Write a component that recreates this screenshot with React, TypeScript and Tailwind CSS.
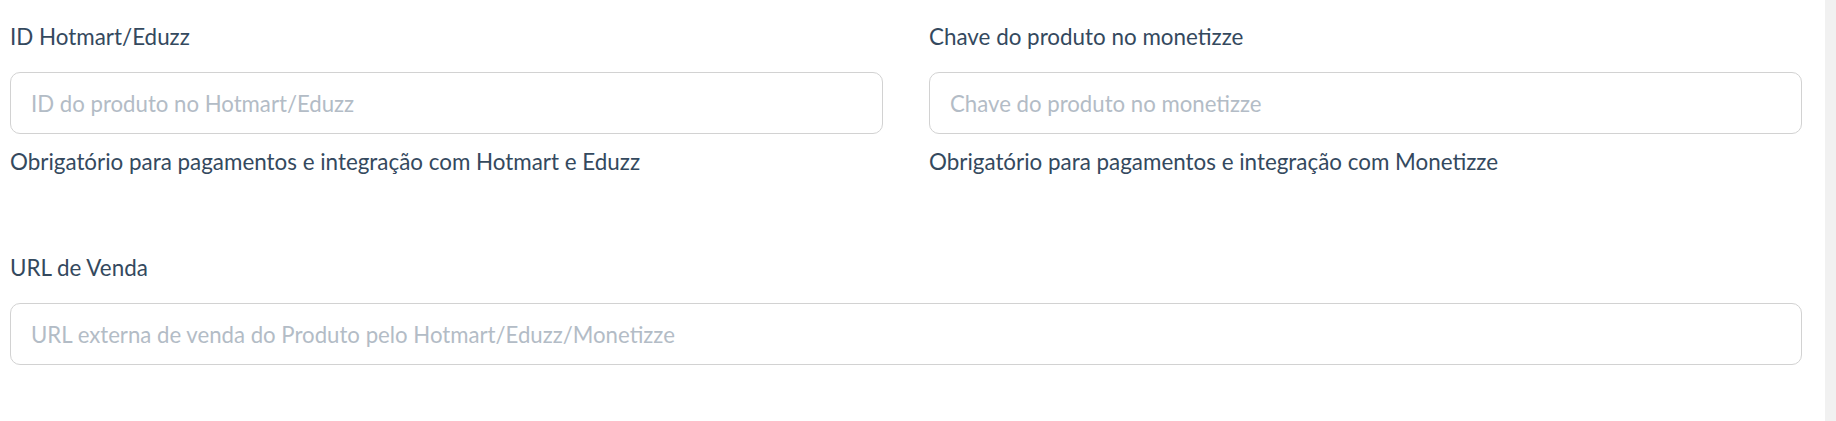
import React from 'react';

type FieldProps = {
  label: string;
  placeholder: string;
  help?: string;
};

function Field({ label, placeholder, help }: FieldProps) {
  return (
    <div className="flex flex-col">
      <label className="text-[22.4px] leading-[27px] text-[#34495e] mb-[22px]">{label}</label>
      <input
        type="text"
        placeholder={placeholder}
        className="h-[62px] w-full rounded-[10px] border border-[#d2d2d2] bg-white px-[20px] text-[22.2px] text-[#34495e] outline-none placeholder:text-[#b3bcc6]"
      />
      {help && (
        <p className="mt-[14px] text-[22.4px] leading-[27px] text-[#34495e]">{help}</p>
      )}
    </div>
  );
}

export default function App() {
  return (
    <div
      className="flex h-[421px] w-full overflow-hidden bg-white"
      style={{ fontFamily: 'Lato, "Noto Sans", sans-serif' }}
    >
      <div className="flex-1 pl-[10px] pr-[23px] pt-[23px]">
        {/* Integration keys */}
        <div className="grid grid-cols-2 gap-x-[46px]">
          <Field
            label="ID Hotmart/Eduzz"
            placeholder="ID do produto no Hotmart/Eduzz"
            help="Obrigatório para pagamentos e integração com Hotmart e Eduzz"
          />
          <Field
            label="Chave do produto no monetizze"
            placeholder="Chave do produto no monetizze"
            help="Obrigatório para pagamentos e integração com Monetizze"
          />
        </div>

        {/* Sales URL */}
        <div className="mt-[79px]">
          <Field
            label="URL de Venda"
            placeholder="URL externa de venda do Produto pelo Hotmart/Eduzz/Monetizze"
          />
        </div>
      </div>

      {/* Scrollbar track */}
      <div className="w-[11px] shrink-0 bg-[#f1f1f1]" />
    </div>
  );
}
